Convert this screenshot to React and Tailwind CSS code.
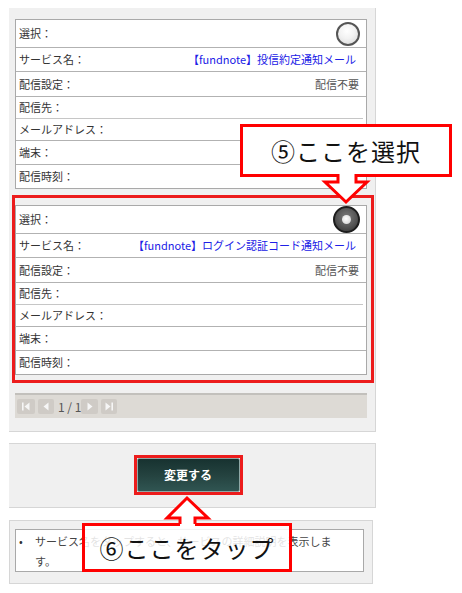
import React from "react";

const FONT = "font-['Noto_Sans_CJK_JP','Noto_Sans',sans-serif]";

function RadioOff() {
  return (
    <span className="block w-[24px] h-[24px] rounded-full border-2 border-[#555] bg-[radial-gradient(circle_at_45%_35%,#ffffff_0%,#f2f2f2_45%,#d4d4d4_100%)]" />
  );
}

function RadioOn() {
  return (
    <span className="flex items-center justify-center w-[27px] h-[27px] rounded-full border-2 border-[#1c1c1c] bg-[radial-gradient(circle_at_50%_40%,#7d7d7d_0%,#555_55%,#2e2e2e_100%)]">
      <span className="block w-[9px] h-[9px] rounded-full bg-[radial-gradient(circle_at_45%_40%,#ffffff,#cfcfcf)]" />
    </span>
  );
}

function Row({ h, label, children, last, noBorder }) {
  return (
    <div
      className={`flex items-center justify-between pl-[3px] pr-[7px] ${h} ${
        last || noBorder ? "" : "border-b border-[#b2b2b2]"
      }`}
    >
      <span className="text-[#333] leading-none">{label}</span>
      {children}
    </div>
  );
}

function Card({ selected, service }) {
  return (
    <div className="w-[352px] bg-white border border-[#a9a9a9]">
      <Row h="h-[28px]" label="選択：">
        <span className="-mr-[1px]">{selected ? <RadioOn /> : <RadioOff />}</span>
      </Row>
      <Row h="h-[24px]" label="サービス名：">
        <span className="text-[#2020e6] mr-[3px] leading-none">{service}</span>
      </Row>
      <Row h="h-[25px]" label="配信設定：">
        <span className="text-[#555] leading-none">配信不要</span>
      </Row>
      <Row h="h-[21px]" label="配信先：" noBorder />
      <div className="h-px bg-[#c6c6c6] mr-[3px]" />
      <Row h="h-[22px]" label="メールアドレス：" />
      <Row h="h-[24px]" label="端末：" />
      <Row h="h-[23px]" label="配信時刻：" last />
    </div>
  );
}

function PagerBtn({ children, w = "w-[17px]" }) {
  return (
    <span className={`flex items-center justify-center ${w} h-[15px] bg-[#cfcbc6] rounded-[2px]`}>
      <svg width="10" height="9" viewBox="0 0 10 9" fill="#f6f6f6">
        {children}
      </svg>
    </span>
  );
}

function Pager() {
  return (
    <div className="mt-[18px] h-[25px] bg-[#dddad5] border-t-2 border-[#c2c0bc] flex items-center pl-[2px]">
      <PagerBtn w="w-[18px]">
        <rect x="1" y="0.5" width="1.6" height="8" />
        <polygon points="8.5,0.5 8.5,8.5 3.5,4.5" />
      </PagerBtn>
      <span className="ml-[3px]" />
      <PagerBtn w="w-[16px]">
        <polygon points="7.5,0.5 7.5,8.5 2.5,4.5" />
      </PagerBtn>
      <span className="ml-[4px] text-[12px] text-[#555] leading-none">1 / 1</span>
      <PagerBtn w="w-[17px]">
        <polygon points="2.5,0.5 2.5,8.5 7.5,4.5" />
      </PagerBtn>
      <span className="ml-[3px]" />
      <PagerBtn w="w-[16px]">
        <polygon points="1.5,0.5 1.5,8.5 6.5,4.5" />
        <rect x="7.4" y="0.5" width="1.6" height="8" />
      </PagerBtn>
    </div>
  );
}

export default function App() {
  return (
    <div className={`relative w-[462px] h-[593px] bg-white overflow-hidden text-[11px] ${FONT}`}>
      <div className="pt-[8px] pl-[9px]">
        {/* list panel */}
        <section className="w-[367px] bg-[#f0f0f0] border-r border-b border-[#d6d6d6] pt-[11px] pl-[6px] pr-[8px] pb-[13px]">
          <Card service="【fundnote】投信約定通知メール" />
          <div className="relative mt-[16px]">
            <Card selected service="【fundnote】ログイン認証コード通知メール" />
            <div className="absolute left-[-3px] top-[-10px] right-[-7px] bottom-[-8px] border-[3px] border-[#ec1c1c] pointer-events-none" />
          </div>
          <Pager />
        </section>

        {/* button panel */}
        <section className="mt-[11px] w-[367px] bg-[#f0f0f0] border-t border-b border-r border-[#d6d6d6] pt-[11px] pb-[12px] flex justify-center pr-[8px]">
          <div className="border-[3px] border-[#ec1c1c]">
            <button className="block w-[103px] h-[34px] border border-[#8fa8a6] rounded-[2px] bg-[linear-gradient(180deg,#173230_0%,#24423f_50%,#305552_100%)] text-white font-bold text-[12px] leading-none">
              変更する
            </button>
          </div>
        </section>

        {/* note panel */}
        <section className="mt-[12px] w-[364px] bg-[#f0f0f0] border border-[#d6d6d6] pt-[8px] pl-[5px] pb-[11px]">
          <div className="w-[349px] bg-white border border-[#a9a9a9] pt-[1px] pr-[14px] text-[#444] leading-[20px]">
            <div className="flex">
              <span className="w-[19px] shrink-0 pl-[3px] text-[#333]">•</span>
              <span>サービス名をタップすると、サービスの詳細説明を表示します。</span>
            </div>
          </div>
        </section>
      </div>

      {/* callout 5 */}
      <div className="absolute left-[240px] top-[124px] w-[212px] h-[53px] bg-white border-[3px] border-[#ff0000] flex items-center justify-center text-[24px] text-[#111] tracking-[1px] leading-none">
        ⑤ここを選択
      </div>
      <svg className="absolute left-[318px] top-[170px]" width="56" height="36" viewBox="318 170 56 36">
        <polygon points="338,172 338,182 325,182 346,202 367,182 356,182 356,172" fill="#ffffff" />
        <polyline
          points="338,174 338,182 325,182 346,202 367,182 356,182 356,174"
          fill="none"
          stroke="#ff0000"
          strokeWidth="3"
          strokeLinejoin="miter"
        />
      </svg>

      {/* callout 6 */}
      <div className="absolute left-[82px] top-[523px] w-[210px] h-[49px] bg-white/85 border-[3px] border-[#ff0000] flex items-center justify-center text-[24px] text-[#111] tracking-[1px] leading-none">
        ⑥ここをタップ
      </div>
      <svg className="absolute left-[160px] top-[494px]" width="56" height="36" viewBox="160 494 56 36">
        <polygon points="180,528 180,518 167,518 187,498 208,518 195,518 195,528" fill="#ffffff" />
        <polyline
          points="180,524 180,518 167,518 187,498 208,518 195,518 195,524"
          fill="none"
          stroke="#ff0000"
          strokeWidth="3"
          strokeLinejoin="miter"
        />
      </svg>
    </div>
  );
}
